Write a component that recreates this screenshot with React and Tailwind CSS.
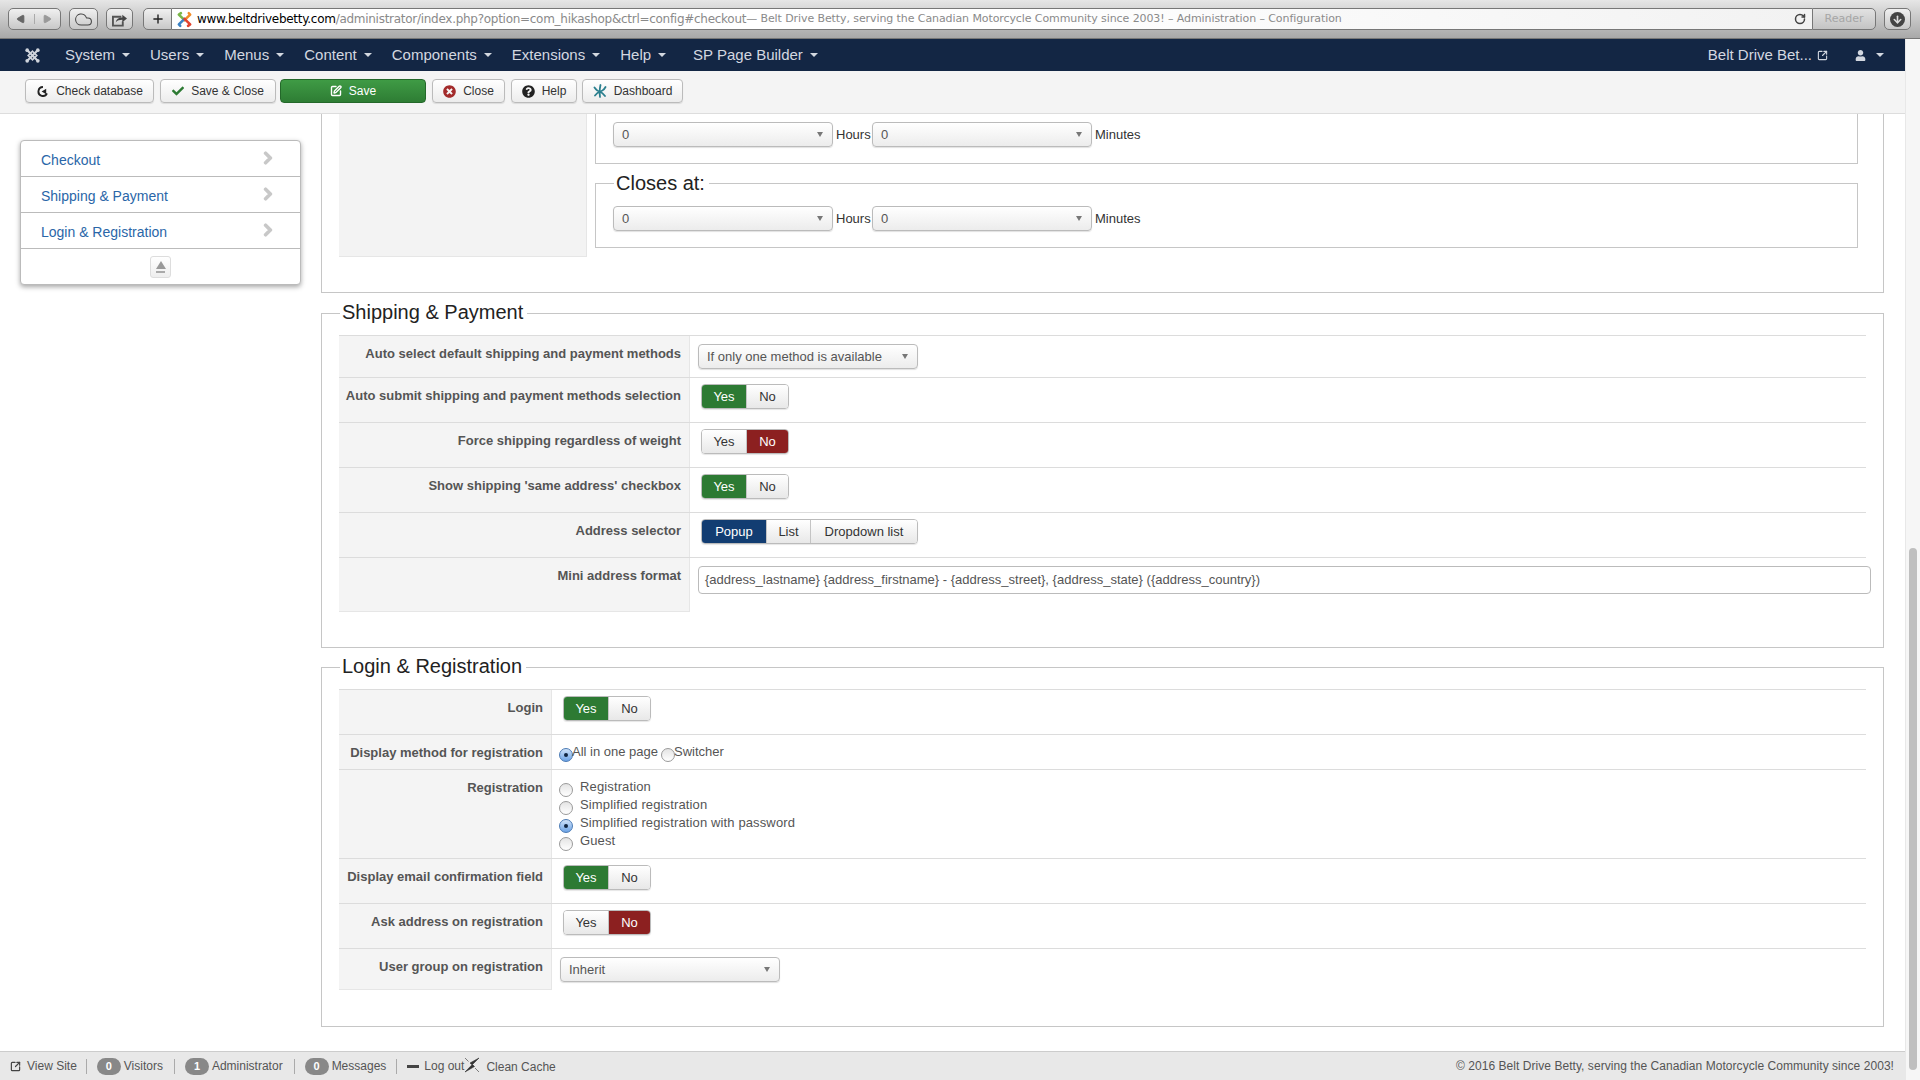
import { Cloud, Plus, RotateCw, ArrowDown, SquarePen, SquareArrowOutUpRight, Play } from 'lucide-react';
import { FaCheck, FaChevronRight, FaQuestionCircle, FaTimesCircle, FaUser } from 'react-icons/fa';

const navItems = ['System', 'Users', 'Menus', 'Content', 'Components', 'Extensions', 'Help'];

const Caret = () => (
  <span className="w-0 h-0 border-x-[4px] border-t-[4px] border-x-transparent border-t-[#d3d8e0]" />
);

const JoomlaLogo = () => (
  <svg viewBox="0 0 24 24" className="w-[17px] h-[17px]" fill="none" stroke="#cfd4dc" strokeWidth="3">
    <path d="M5 5l14 14M19 5L5 19" />
    <path d="M12 6l6 6-6 6-6-6z" strokeWidth="2.4" />
    <circle cx="4.5" cy="4.5" r="2.6" fill="#cfd4dc" stroke="none" />
    <circle cx="19.5" cy="4.5" r="2.6" fill="#cfd4dc" stroke="none" />
    <circle cx="4.5" cy="19.5" r="2.6" fill="#cfd4dc" stroke="none" />
    <circle cx="19.5" cy="19.5" r="2.6" fill="#cfd4dc" stroke="none" />
  </svg>
);

const Favicon = () => (
  <svg viewBox="0 0 24 24" className="w-[17px] h-[17px] flex-shrink-0" fill="none" strokeWidth="3.6" strokeLinecap="round">
    <path d="M4 5l8 8M4 5l3-2" stroke="#7ab648" />
    <path d="M20 5l-8 8M20 5l-2-2" stroke="#f28c28" />
    <path d="M4 19l8-8M4 19l2 2" stroke="#3b82c4" />
    <path d="M20 19l-8-8M20 19l-3 2" stroke="#e2432e" />
  </svg>
);

const ShareIcon = () => (
  <svg viewBox="0 0 18 16" className="w-[17px] h-[15px]">
    <path d="M11 5H2v9.5h10.5V10" fill="none" stroke="#555" strokeWidth="2" />
    <path d="M5 11c.5-3.5 3-5.2 7-5.2V3l5 4-5 4V8.300C9 8.300 6.800 9 5 11z" fill="#444" />
  </svg>
);

const CheckDbIcon = () => (
  <svg viewBox="0 0 14 14" className="w-[13px] h-[13px]" fill="none" stroke="#222" strokeWidth="2">
    <path d="M7.5 2.2A4.800 4.800 0 1 0 11.800 9" />
    <path d="M6 7l5-3v6z" fill="#222" stroke="none" />
  </svg>
);

const DashIcon = () => (
  <svg viewBox="0 0 14 14" className="w-[14px] h-[14px]" fill="none" stroke="#2a7f8e" strokeWidth="1.800" strokeLinecap="round">
    <path d="M7.5 1C6.500 5 6.500 9 7 13M1.500 3.500C4 7 6 7.500 7 7.500S11 6 12.500 3M2 11.500C4 9 5.500 8 7 7.500 9 8.500 10.500 10 12 12" />
  </svg>
);

const BoltIcon = () => (
  <svg viewBox="0 0 16 16" className="w-[16px] h-[16px]" fill="#333" stroke="#333" strokeWidth="0.6">
    <path d="M1 1l3.500 3.500M11 11l4 4" fill="none" />
    <path d="M15 1L6 6l2 1.800L1 15l9.500-5.500-2-2z" />
  </svg>
);

const ToolBtn = ({ icon, label, width }) => (
  <button className={`${width} h-[24px] flex items-center justify-center gap-[7px] rounded-[4px] border border-[#bbb] bg-linear-to-b from-white to-[#ececec] text-[12px] text-[#333] shadow-[0_1px_1px_rgba(0,0,0,0.1)]`}>
    {icon}
    {label}
  </button>
);

const Seg = ({ label, width, active }) => (
  <span className={`${width} h-full flex items-center justify-center border-l first:border-l-0 border-[#c4c4c4] ${active || 'bg-linear-to-b from-white to-[#e8e8e8] text-[#333]'}`}>
    {label}
  </span>
);

const SegGroup = ({ children }) => (
  <div className="inline-flex h-[25px] rounded-[4px] border border-[#bbb] overflow-hidden text-[13px] shadow-[0_1px_1px_rgba(0,0,0,0.1)]">
    {children}
  </div>
);

const YesNo = ({ on }) => (
  <SegGroup>
    <Seg label="Yes" width="w-[44px]" active={on ? 'bg-[#2d7a33] text-white' : ''} />
    <Seg label="No" width="w-[42px]" active={on ? '' : 'bg-[#8c2020] text-white'} />
  </SegGroup>
);

const SelectBox = ({ value, width = 'w-[220px]' }) => (
  <div className={`${width} h-[25px] flex items-center justify-between pl-[8px] pr-[9px] rounded-[4px] border border-[#bbb] bg-linear-to-b from-white to-[#ececec] text-[13px] text-[#555] shadow-[0_1px_1px_rgba(0,0,0,0.12)] flex-shrink-0`}>
    {value}
    <span className="w-0 h-0 border-x-[3px] border-t-[5px] border-x-transparent border-t-[#777]" />
  </div>
);

const Radio = ({ checked }) => (
  <span className={`mt-[5px] w-[14px] h-[14px] flex-shrink-0 rounded-full border flex items-center justify-center ${checked ? 'border-[#4a7ab5] bg-linear-to-b from-[#cfe2f8] to-[#6da4e6]' : 'border-[#9a9a9a] bg-linear-to-b from-[#e4e4e4] to-white'}`}>
    {checked && <span className="w-[4px] h-[4px] rounded-full bg-[#10243f]" />}
  </span>
);

const Row = ({ label, labelWidth, height, cell = 'pt-[6px]', last, children }) => (
  <div className={`${height} flex border-t border-[#dcdcdc]`}>
    <div className={`${labelWidth} flex-shrink-0 bg-[#f4f4f4] border-r border-[#e6e6e6] pt-[9px] pr-[8px] text-right text-[13px] leading-[18px] font-bold text-[#555] ${last ? 'border-b' : ''}`}>
      {label}
    </div>
    <div className={`flex-1 min-w-0 ${cell}`}>{children}</div>
  </div>
);

const Section = ({ title, children, className }) => (
  <fieldset className={`min-w-0 border border-[#c6c6c6] px-[17px] ${className}`}>
    <legend className="ml-[1px] pl-[2px] pr-[4px] pb-[2px] text-[20px] leading-[26px] text-[#222]">{title}</legend>
    <div className="mt-[8px]">{children}</div>
  </fieldset>
);

const TimeRow = () => (
  <div className="flex items-center text-[13px] text-[#333]">
    <SelectBox value="0" />
    <span className="w-[39px] pl-[3px]">Hours</span>
    <SelectBox value="0" />
    <span className="pl-[3px]">Minutes</span>
  </div>
);

const App = () => {
  return (
    <div className="w-[1920px] h-[1080px] flex flex-col overflow-hidden bg-white font-['Liberation_Sans',Arial,sans-serif]">
      {/* browser bar */}
      <div className="h-[39px] flex-shrink-0 flex items-start pt-[8px] pl-[8px] bg-linear-to-b from-[#e6e6e6] to-[#a8a8a8] border-b border-[#777]">
        <div className="w-[53px] h-[22px] flex items-center rounded-[5px] border border-[#777] bg-linear-to-b from-[#f0f0f0] to-[#c8c8c8]">
          <span className="w-[26px] flex justify-center border-r border-[#aaa]">
            <Play className="w-[10px] h-[10px] rotate-180 text-[#666] fill-[#666]" />
          </span>
          <span className="w-[26px] flex justify-center">
            <Play className="w-[10px] h-[10px] text-[#999] fill-[#999]" />
          </span>
        </div>
        <div className="ml-[8px] w-[29px] h-[22px] flex items-center justify-center rounded-[5px] border border-[#777] bg-linear-to-b from-[#f0f0f0] to-[#c8c8c8]">
          <Cloud className="w-[19px] h-[19px] text-[#444]" strokeWidth={1.3} />
        </div>
        <div className="ml-[8px] w-[27px] h-[22px] flex items-center justify-center rounded-[5px] border border-[#777] bg-linear-to-b from-[#f0f0f0] to-[#c8c8c8]">
          <ShareIcon />
        </div>
        <div className="ml-[10px] w-[29px] h-[22px] flex items-center justify-center rounded-l-[5px] border border-[#777] bg-linear-to-b from-[#f0f0f0] to-[#c8c8c8]">
          <Plus className="w-[14px] h-[14px] text-[#222]" strokeWidth={2.4} />
        </div>
        <div className="w-[1640px] h-[22px] flex items-center pl-[4px] pr-[6px] border-y border-[#777] bg-linear-to-r from-white via-white to-[#f2f2f2] font-['DejaVu_Sans',sans-serif] whitespace-nowrap overflow-hidden">
          <Favicon />
          <span className="ml-[4px] text-[12px] tracking-[-0.28px] text-black">www.beltdrivebetty.com</span>
          <span className="text-[12px] tracking-[-0.28px] text-[#8a8a8a]">/administrator/index.php?option=com_hikashop&amp;ctrl=config#checkout</span>
          <span className="text-[11px] tracking-[-0.09px] text-[#8a8a8a]"> — Belt Drive Betty, serving the Canadian Motorcycle Community since 2003! – Administration – Configuration</span>
          <RotateCw className="ml-auto w-[12px] h-[12px] text-[#444]" strokeWidth={3} />
        </div>
        <div className="w-[64px] h-[22px] flex items-center justify-center rounded-r-[5px] border border-[#777] bg-linear-to-b from-[#e2e2e2] to-[#c4c4c4] text-[11px] text-[#a6a6a6] font-['DejaVu_Sans',sans-serif]">
          Reader
        </div>
        <div className="ml-[8px] w-[27px] h-[22px] flex items-center justify-center rounded-[5px] border border-[#777] bg-linear-to-b from-[#f0f0f0] to-[#c8c8c8]">
          <span className="w-[15px] h-[15px] rounded-full bg-[#444] flex items-center justify-center">
            <ArrowDown className="w-[11px] h-[11px] text-[#ddd]" strokeWidth={3.5} />
          </span>
        </div>
      </div>

      <div className="flex-1 flex min-h-0">
        <div className="flex-1 flex flex-col min-w-0">
          {/* admin menu */}
          <div className="h-[32px] flex-shrink-0 flex items-center pl-[24px] pr-[21px] bg-[#132644] text-[15px] text-[#d3d8e0]">
            <JoomlaLogo />
            <div className="ml-[24px] flex items-center gap-[20px]">
              {navItems.map((item) => (
                <span key={item} className="flex items-center gap-[7px]">
                  {item}
                  <Caret />
                </span>
              ))}
              <span className="ml-[7px] flex items-center gap-[7px]">
                SP Page Builder
                <Caret />
              </span>
            </div>
            <span className="ml-auto flex items-center gap-[5px]">
              Belt Drive Bet...
              <SquareArrowOutUpRight className="w-[11px] h-[11px]" strokeWidth={2.4} />
            </span>
            <FaUser className="ml-[27px] w-[11px] h-[11px]" />
            <span className="ml-[10px] flex">
              <Caret />
            </span>
          </div>

          {/* toolbar */}
          <div className="h-[43px] flex-shrink-0 flex pl-[25px] pt-[8px] bg-[#f4f4f4] border-b border-[#ddd]">
            <ToolBtn width="w-[129px]" icon={<CheckDbIcon />} label="Check database" />
            <div className="ml-[6px]">
              <ToolBtn width="w-[116px]" icon={<FaCheck className="w-[12px] h-[12px] text-[#2d7a33]" />} label="Save & Close" />
            </div>
            <button className="ml-[4px] w-[146px] h-[24px] flex items-center justify-center gap-[7px] rounded-[4px] border border-[#24682a] bg-linear-to-b from-[#3f9b45] to-[#2e7d34] text-[12px] text-white">
              <SquarePen className="w-[12px] h-[12px]" strokeWidth={2.8} />
              Save
            </button>
            <div className="ml-[6px]">
              <ToolBtn width="w-[73px]" icon={<FaTimesCircle className="w-[13px] h-[13px] text-[#a32b2b]" />} label="Close" />
            </div>
            <div className="ml-[6px]">
              <ToolBtn width="w-[66px]" icon={<FaQuestionCircle className="w-[13px] h-[13px] text-[#222]" />} label="Help" />
            </div>
            <div className="ml-[5px]">
              <ToolBtn width="w-[101px]" icon={<DashIcon />} label="Dashboard" />
            </div>
          </div>

          {/* page */}
          <div className="flex-1 flex min-h-0 overflow-hidden">
            <div className="w-[321px] flex-shrink-0 pl-[20px] pt-[26px]">
              <div className="w-[281px] rounded-[4px] border border-[#bbb] bg-white shadow-[0_2px_5px_rgba(0,0,0,0.35)]">
                {['Checkout', 'Shipping & Payment', 'Login & Registration'].map((item) => (
                  <div key={item} className="h-[36px] flex items-center justify-between pl-[20px] pr-[27px] border-b border-[#bbb] text-[14px] text-[#2a66a8]">
                    <span className="pt-[3px]">{item}</span>
                    <FaChevronRight className="w-[10px] h-[14px] mb-[2px] text-[#c8c8c8] stroke-[#c8c8c8] stroke-[50px]" />
                  </div>
                ))}
                <div className="h-[35px] flex items-center justify-center">
                  <div className="w-[21px] h-[22px] flex flex-col items-center justify-center gap-[2px] rounded-[3px] border border-[#ddd] bg-linear-to-b from-white to-[#eee]">
                    <span className="w-0 h-0 border-x-[5px] border-b-[8px] border-x-transparent border-b-[#999]" />
                    <span className="w-[9px] h-[2px] bg-[#aaa]" />
                  </div>
                </div>
              </div>
            </div>

            <div className="w-[1563px] flex-shrink-0">
              <div className="h-[179px] flex pl-[17px] border-x border-b border-[#c6c6c6]">
                <div className="w-[248px] h-[143px] flex-shrink-0 bg-[#f3f3f3] border-b border-r border-[#e6e6e6]" />
                <div className="ml-[8px] w-[1263px]">
                  <div className="h-[50px] pt-[8px] pl-[17px] border-x border-b border-[#c6c6c6]">
                    <TimeRow />
                  </div>
                  <fieldset className="mt-[5px] h-[79px] pl-[17px] border border-[#c6c6c6]">
                    <legend className="ml-[1px] pl-[2px] pr-[4px] text-[20px] leading-[28px] text-[#222]">Closes at:</legend>
                    <div className="pt-[9px]">
                      <TimeRow />
                    </div>
                  </fieldset>
                </div>
              </div>

              <Section title="Shipping & Payment" className="mt-[6px] pb-[35px]">
                <Row label="Auto select default shipping and payment methods" labelWidth="w-[351px]" height="h-[42px]" cell="pl-[8px] pt-[8px]">
                  <SelectBox value="If only one method is available" />
                </Row>
                <Row label="Auto submit shipping and payment methods selection" labelWidth="w-[351px]" height="h-[45px]" cell="pl-[11px] pt-[6px]">
                  <YesNo on />
                </Row>
                <Row label="Force shipping regardless of weight" labelWidth="w-[351px]" height="h-[45px]" cell="pl-[11px] pt-[6px]">
                  <YesNo />
                </Row>
                <Row label="Show shipping 'same address' checkbox" labelWidth="w-[351px]" height="h-[45px]" cell="pl-[11px] pt-[6px]">
                  <YesNo on />
                </Row>
                <Row label="Address selector" labelWidth="w-[351px]" height="h-[45px]" cell="pl-[11px] pt-[6px]">
                  <SegGroup>
                    <Seg label="Popup" width="w-[64px]" active="bg-[#123d72] text-white" />
                    <Seg label="List" width="w-[44px]" />
                    <Seg label="Dropdown list" width="w-[107px]" />
                  </SegGroup>
                </Row>
                <Row label="Mini address format" labelWidth="w-[351px]" height="h-[55px]" cell="pl-[8px] pt-[8px]" last>
                  <div className="w-[1173px] h-[28px] flex items-center pl-[6px] rounded-[4px] border border-[#bbb] bg-white text-[13px] text-[#555]">
                    {'{address_lastname} {address_firstname} - {address_street}, {address_state} ({address_country})'}
                  </div>
                </Row>
              </Section>

              <Section title="Login & Registration" className="mt-[5px] pb-[36px]">
                <Row label="Login" labelWidth="w-[213px]" height="h-[45px]" cell="pl-[11px] pt-[6px]">
                  <YesNo on />
                </Row>
                <Row label="Display method for registration" labelWidth="w-[213px]" height="h-[35px]" cell="pl-[7px] pt-[8px]">
                  <div className="flex text-[13px] leading-[18px] text-[#555]">
                    <Radio checked />
                    <span className="ml-[-1px]">All in one page</span>
                    <span className="ml-[3px] flex">
                      <Radio />
                    </span>
                    <span className="ml-[-1px]">Switcher</span>
                  </div>
                </Row>
                <Row label="Registration" labelWidth="w-[213px]" height="h-[89px]" cell="pl-[7px] pt-[8px]">
                  {['Registration', 'Simplified registration', 'Simplified registration with password', 'Guest'].map((item) => (
                    <div key={item} className="h-[18px] flex gap-[7px] text-[13px] leading-[18px] tracking-[0.13px] text-[#555]">
                      <Radio checked={item === 'Simplified registration with password'} />
                      {item}
                    </div>
                  ))}
                </Row>
                <Row label="Display email confirmation field" labelWidth="w-[213px]" height="h-[45px]" cell="pl-[11px] pt-[6px]">
                  <YesNo on />
                </Row>
                <Row label="Ask address on registration" labelWidth="w-[213px]" height="h-[45px]" cell="pl-[11px] pt-[6px]">
                  <YesNo />
                </Row>
                <Row label="User group on registration" labelWidth="w-[213px]" height="h-[42px]" cell="pl-[8px] pt-[8px]" last>
                  <SelectBox value="Inherit" />
                </Row>
              </Section>
            </div>
          </div>

          {/* status bar */}
          <div className="h-[29px] flex-shrink-0 flex items-center pl-[10px] pr-[11px] bg-[#e8e8e8] border-t border-[#ccc] text-[12px] text-[#555] whitespace-nowrap">
            <SquareArrowOutUpRight className="w-[11px] h-[11px] text-[#444]" strokeWidth={2.6} />
            <span className="ml-[6px]">View Site</span>
            <span className="ml-[9px] w-px h-[15px] bg-[#aaa]" />
            <span className="ml-[10px] w-[24px] h-[17px] flex items-center justify-center rounded-full bg-[#888] text-[11px] font-bold text-white">0</span>
            <span className="ml-[3px]">Visitors</span>
            <span className="ml-[11px] w-px h-[15px] bg-[#aaa]" />
            <span className="ml-[10px] w-[24px] h-[17px] flex items-center justify-center rounded-full bg-[#888] text-[11px] font-bold text-white">1</span>
            <span className="ml-[3px]">Administrator</span>
            <span className="ml-[11px] w-px h-[15px] bg-[#aaa]" />
            <span className="ml-[10px] w-[24px] h-[17px] flex items-center justify-center rounded-full bg-[#888] text-[11px] font-bold text-white">0</span>
            <span className="ml-[3px]">Messages</span>
            <span className="ml-[10px] w-px h-[15px] bg-[#aaa]" />
            <span className="ml-[10px] w-[12px] h-[3px] bg-[#444]" />
            <span className="ml-[5px]">Log out</span>
            <span className="mb-[2px]">
              <BoltIcon />
            </span>
            <span className="ml-[6px] mt-[2px]">Clean Cache</span>
            <span className="ml-auto tracking-[0.05px]">© 2016 Belt Drive Betty, serving the Canadian Motorcycle Community since 2003!</span>
          </div>
        </div>

        {/* page scrollbar */}
        <div className="w-[15px] flex-shrink-0 bg-[#f6f6f6] border-l border-[#e8e8e8] pl-[3px] pt-[509px]">
          <div className="w-[8px] h-[522px] rounded-full bg-[#bfbfbf]" />
        </div>
      </div>
    </div>
  );
};

export default App;
